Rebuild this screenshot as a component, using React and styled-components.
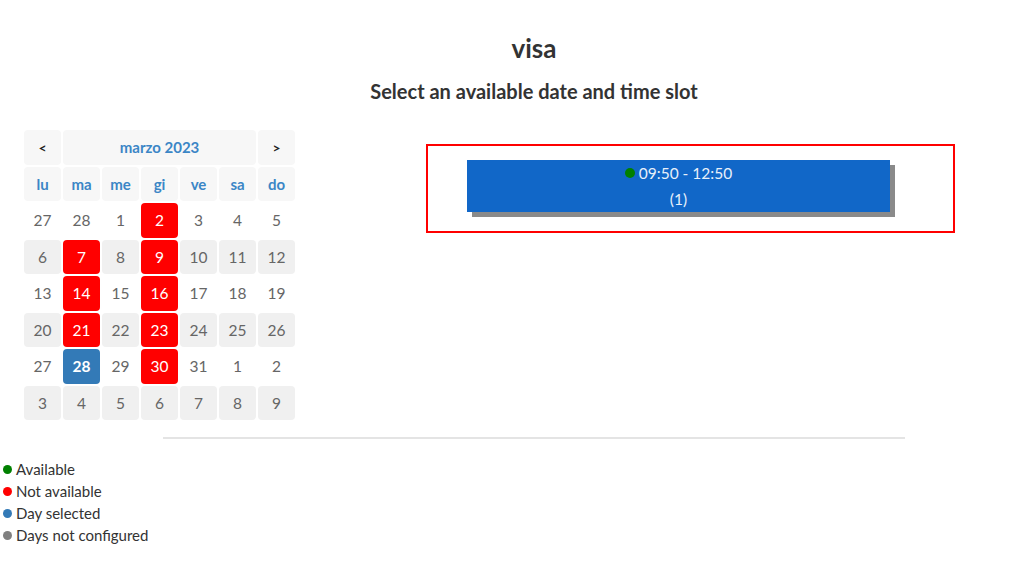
import React from "react";
import styled, { createGlobalStyle } from "styled-components";

const GlobalStyle = createGlobalStyle`
  html, body {
    margin: 0;
    padding: 0;
    background: #fff;
    font-family: Lato, "Open Sans", sans-serif;
    color: #333;
  }
`;

const Page = styled.div`
  width: 1024px;
  height: 561px;
  overflow: hidden;
`;

const Header = styled.header`
  padding: 32px 0 0 44px;
  text-align: center;
`;

const Title = styled.h1`
  margin: 0;
  font-size: 26px;
  line-height: 32px;
  font-weight: 700;
  color: #333;
`;

const Subtitle = styled.h2`
  margin: 15px 0 0;
  font-size: 20px;
  line-height: 24px;
  font-weight: 700;
  color: #333;
`;

const Body = styled.div`
  display: flex;
  align-items: flex-start;
  margin-top: 27px;
  padding-left: 24px;
`;

const Grid = styled.div`
  display: grid;
  grid-template-columns: repeat(7, 37px);
  grid-auto-rows: 34.5px;
  gap: 2px;
`;

const Cell = styled.div`
  display: flex;
  align-items: center;
  justify-content: center;
  border-radius: 4px;
  font-size: 15.5px;
  color: ${(p) => (p.$tone ? "#fff" : "#666")};
  font-weight: ${(p) => (p.$tone === "sel" ? 700 : 400)};
  background: ${(p) =>
    p.$tone === "red" ? "#ff0000" : p.$tone === "sel" ? "#337ab7" : p.$shade ? "#f0f0f0" : "transparent"};
  grid-column: ${(p) => p.$span || "auto"};
`;

const HeadCell = styled(Cell)`
  background: #f7f7f7;
  color: ${(p) => (p.$nav ? "#222" : "#3b86c6")};
  font-weight: 700;
  font-size: ${(p) => (p.$nav ? "14px" : "15px")};
`;

const SlotPanel = styled.div`
  margin: 14px 0 0 131px;
  width: 525px;
  height: 85px;
  border: 2px solid #ff0000;
`;

const SlotButton = styled.div`
  margin: 14px 0 0 39px;
  width: 423px;
  height: 52px;
  background: #1167c8;
  box-shadow: 5px 5px 0 #8a8a8a;
  color: #e8f0fa;
  font-size: 15.5px;
  text-align: center;
  display: flex;
  flex-direction: column;
  justify-content: center;
  line-height: 26px;
`;

const Dot = styled.span`
  display: inline-block;
  width: ${(p) => p.$size || 9}px;
  height: ${(p) => p.$size || 9}px;
  border-radius: 50%;
  background: ${(p) => p.$color};
  margin-right: 4px;
  vertical-align: 1px;
`;

const Divider = styled.hr`
  margin: 17px 119px 0 163px;
  border: 0;
  border-top: 2px solid #e4e4e4;
`;

const Legend = styled.ul`
  list-style: none;
  margin: 19px 0 0 3px;
  padding: 0;
  font-size: 15px;
  line-height: 22px;
  color: #333;
`;

const weeks = [
  [27, 28, 1, 2, 3, 4, 5],
  [6, 7, 8, 9, 10, 11, 12],
  [13, 14, 15, 16, 17, 18, 19],
  [20, 21, 22, 23, 24, 25, 26],
  [27, 28, 29, 30, 31, 1, 2],
  [3, 4, 5, 6, 7, 8, 9],
];

const toneFor = (row, col) => {
  if (row === 4 && col === 1) return "sel";
  if (row === 0 && col === 3) return "red";
  if (row >= 1 && row <= 4 && col === 3) return "red";
  if (row >= 1 && row <= 3 && col === 1) return "red";
  return undefined;
};

export default function App() {
  return (
    <Page>
      <GlobalStyle />
      <Header>
        <Title>visa</Title>
        <Subtitle>Select an available date and time slot</Subtitle>
      </Header>
      <Body>
        <Grid>
          <HeadCell $nav>&lt;</HeadCell>
          <HeadCell $span="span 5">marzo 2023</HeadCell>
          <HeadCell $nav>&gt;</HeadCell>
          {["lu", "ma", "me", "gi", "ve", "sa", "do"].map((d) => (
            <HeadCell key={d}>{d}</HeadCell>
          ))}
          {weeks.map((w, r) =>
            w.map((n, c) => (
              <Cell key={`${r}-${c}`} $shade={r % 2 === 1} $tone={toneFor(r, c)}>
                {n}
              </Cell>
            ))
          )}
        </Grid>
        <SlotPanel>
          <SlotButton>
            <div>
              <Dot $color="#008000" $size={10} />
              09:50 - 12:50
            </div>
            <div>(1)</div>
          </SlotButton>
        </SlotPanel>
      </Body>
      <Divider />
      <Legend>
        <li><Dot $color="#008000" />Available</li>
        <li><Dot $color="#ff0000" />Not available</li>
        <li><Dot $color="#337ab7" />Day selected</li>
        <li><Dot $color="#808080" />Days not configured</li>
      </Legend>
    </Page>
  );
}
